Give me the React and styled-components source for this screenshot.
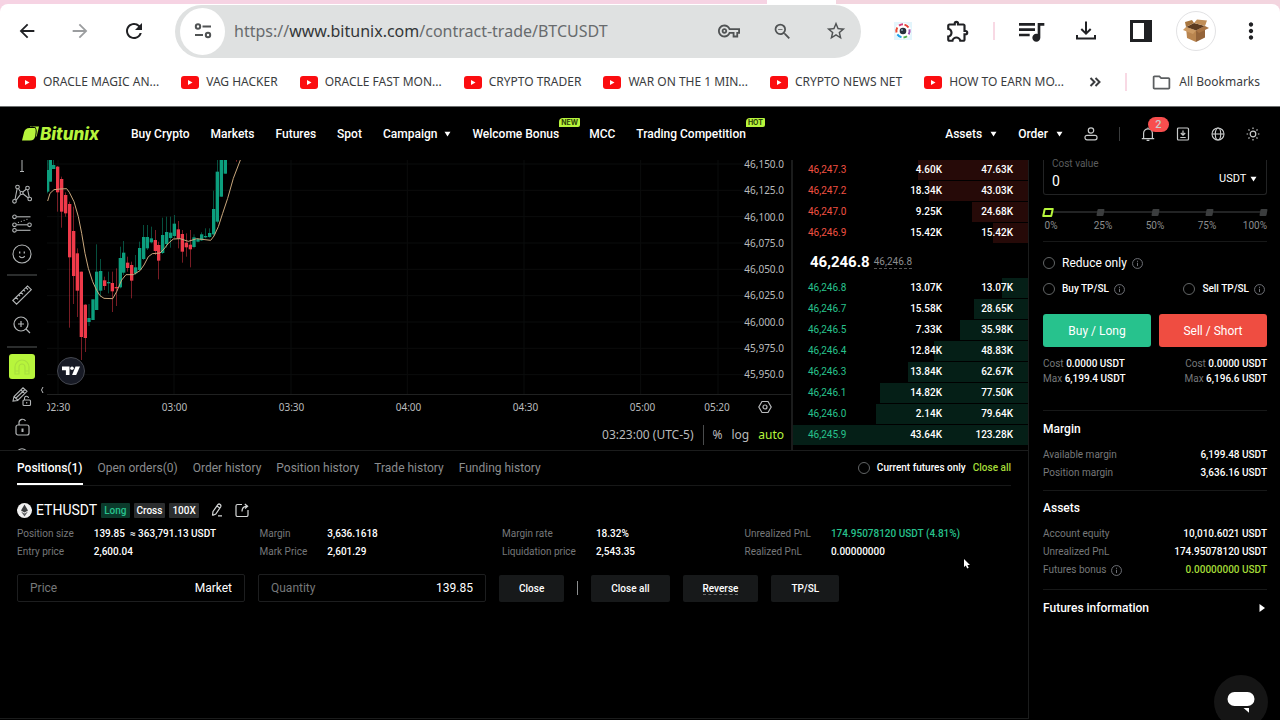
import React from 'react';
import styled, { createGlobalStyle, css } from 'styled-components';
import {
  MdArrowBack,
  MdArrowForward,
  MdRefresh,
  MdOutlineVpnKey,
  MdZoomOut,
  MdStarBorder,
  MdOutlineExtension,
  MdQueueMusic,
  MdMoreVert,
  MdOutlineFolder,
} from 'react-icons/md';

const GlobalStyle = createGlobalStyle`
  :root {
    --lime: #b7f53c;
    --green: #27c28d;
    --red: #ef4d41;
    --line: #1b1c1c;
    --muted: #76787a;
    --ui: Roboto, "Liberation Sans", sans-serif;
    --system: "Noto Sans", "Open Sans", sans-serif;
  }

  * {
    box-sizing: border-box;
  }

  body {
    margin: 0;
    background: #000;
    color: #fff;
    font: 400 10px/18px var(--ui);
  }

  button, input, select {
    font: inherit;
    color: inherit;
    margin: 0;
    padding: 0;
    border: 0;
    background: none;
  }

  a {
    color: inherit;
    text-decoration: none;
  }

  h2, dl, dd {
    margin: 0;
  }

  svg {
    display: block;
    flex: none;
  }
`;

const Page = styled.div`
  display: flex;
  flex-direction: column;
  min-height: 100vh;
`;

/* ---------- browser ---------- */

const Browser = styled.div`
  padding-top: 4px;
  background: linear-gradient(90deg, #f6d3e3 767px, #fff 767px, #fff 836px, #f3d5df 836px);
  border-bottom: 1px solid #6d7070;
  font-family: var(--system);
`;

const BrowserInner = styled.div`
  background: #fff;
  border-radius: 8px 8px 0 0;
  color: #202124;
`;

const NavBar = styled.div`
  display: flex;
  align-items: center;
  height: 54px;
  padding: 0 2px 0 16px;
`;

const NavButtons = styled.div`
  display: flex;
  gap: 31px;
  width: 159px;
`;

const IconButton = styled.button`
  display: flex;
  align-items: center;
  justify-content: center;
  color: ${({ $color }) => $color || 'inherit'};
`;

const Address = styled.div`
  display: flex;
  align-items: center;
  flex: 1;
  height: 53px;
  padding: 0 14px 0 5px;
  border-radius: 27px;
  background: #dfe1e1;
  color: #505354;
`;

const SiteChip = styled.button`
  display: flex;
  align-items: center;
  justify-content: center;
  width: 45px;
  height: 47px;
  border-radius: 50%;
  background: #fff;
`;

const UrlText = styled.span`
  flex: 1;
  margin-left: 9px;
  font-size: 16px;
  color: #686b6d;

  b {
    font-weight: 400;
    color: #333638;
  }
`;

const AddressActions = styled.div`
  display: flex;
  gap: 32px;
`;

const Extensions = styled.div`
  display: flex;
  align-items: center;
  margin-left: 14px;

  button {
    width: 55px;
  }

  i {
    margin: 0 8px;
  }
`;

const PinkLine = styled.i`
  width: 2px;
  height: 18px;
  background: #f8d9e4;
`;

const Avatar = styled.span`
  display: flex;
  align-items: center;
  justify-content: center;
  width: 40px;
  height: 40px;
  border: 1px solid #e2e2e4;
  border-radius: 50%;
`;

const Bookmarks = styled.div`
  display: flex;
  align-items: center;
  gap: 22px;
  height: 48px;
  padding: 0 20px 0 18px;
  font-size: 12px;
  color: #3a3c3e;

  a {
    display: flex;
    align-items: center;
    gap: 7px;
    white-space: nowrap;
  }
`;

const BookmarksEnd = styled.div`
  display: flex;
  align-items: center;
  gap: 24px;
  margin-left: auto;
`;

/* ---------- site header ---------- */

const Header = styled.header`
  display: flex;
  align-items: center;
  height: 53px;
  padding: 0 20px 0 22px;
  font-size: 12px;
  font-weight: 500;
`;

const Logo = styled.a`
  display: flex;
  align-items: center;
  gap: 1px;
  width: 109px;
  color: var(--lime);
  font: italic 800 17px/20px Inter, sans-serif;
`;

const Menu = styled.nav`
  display: flex;
  gap: 21px;
  flex: 1;

  a {
    position: relative;
    display: flex;
    align-items: center;
    gap: 7px;
    white-space: nowrap;
  }
`;

const Badged = styled.a`
  margin-right: 9px;
`;

const Tag = styled.span`
  position: absolute;
  left: 100%;
  top: -7px;
  padding: 0 2px;
  border-radius: 4px 1px 2px 0;
  background: var(--lime);
  color: #2c4206;
  font: 700 7px/9px Inter, sans-serif;
`;

const Tools = styled.div`
  display: flex;
  align-items: center;
  gap: 21px;
`;

const DropButton = styled.button`
  display: flex;
  align-items: center;
  gap: 8px;
`;

const Bell = styled(IconButton)`
  position: relative;

  span {
    position: absolute;
    left: 7px;
    top: -10px;
    width: 21px;
    border-radius: 8px;
    background: #f84e4e;
    font: 500 11px/15px var(--ui);
  }
`;

const IconSet = styled.div`
  display: flex;
  align-items: center;
  gap: 21px;
  color: #c9cbcb;
`;

const Divider = styled.i`
  width: 1px;
  height: ${({ $h }) => $h || 14}px;
  background: ${({ $tone }) => $tone || '#3a3c3d'};
`;

/* ---------- trading workspace ---------- */

const Workspace = styled.main`
  display: grid;
  grid-template-columns: minmax(0, 1fr) 251px;
  flex: 1;
`;

const Desk = styled.div`
  display: flex;
  flex-direction: column;
  border-bottom: 1px solid var(--line);
  margin-bottom: 1px;
`;

const TopRow = styled.div`
  display: grid;
  grid-template-columns: 47px minmax(0, 1fr) 236px;
  height: 291px;
  border-bottom: 1px solid var(--line);
  overflow: hidden;
`;

const DrawBar = styled.div`
  display: flex;
  flex-direction: column;
  align-items: center;
  width: 44px;
  color: #b2b5b6;

  hr {
    width: 30px;
    height: 2px;
    margin: 6px 0 4px;
    border: 0;
    background: #2b2d2d;
  }
`;

const DrawTool = styled.button`
  display: flex;
  flex: none;
  align-items: center;
  justify-content: center;
  width: 30px;
  height: ${({ $h }) => $h || 30}px;

  ${({ $active }) => $active && css`
    width: 26px;
    margin: 2px 0 3px;
    border-radius: 3px;
    background: var(--lime);
    color: #a8df3e;
  `}
`;

const Chart = styled.section`
  position: relative;
  display: flex;
  flex-direction: column;
  border-right: 2px solid var(--line);
  font-family: var(--system);
  color: #b9bbbd;
`;

const PlotRow = styled.div`
  display: flex;
  height: 235px;
  border-bottom: 1px solid #202121;
`;

const Plot = styled.svg`
  flex: 1;
  width: 0;
  height: 234px;
`;

const PriceAxis = styled.div`
  display: flex;
  flex-direction: column;
  justify-content: space-between;
  height: 218px;
  padding-right: 7px;
  line-height: 8px;
  text-align: right;
`;

const TimeAxis = styled.div`
  display: flex;
  align-items: center;
  overflow: hidden;
  height: 24px;

  span {
    flex: 0 0 117px;
    text-align: center;
  }

  span:first-child {
    margin-left: -48px;
  }

  span:nth-last-child(2) {
    flex-basis: 32px;
  }

  button {
    margin-left: auto;
    margin-right: 19px;
  }
`;

const ChartFoot = styled.div`
  display: flex;
  align-items: center;
  justify-content: flex-end;
  height: 31px;
  padding-right: 7px;
  gap: 9px;
  font-size: 12px;
`;

const ScaleButton = styled.button`
  color: ${({ $active }) => ($active ? 'var(--lime)' : 'inherit')};
`;

const TvMark = styled.a`
  position: absolute;
  left: 9px;
  top: 196px;
`;

const Collapse = styled.button`
  position: absolute;
  left: -8px;
  top: 226px;
`;

const Book = styled.section`
  overflow: hidden;
  margin-bottom: 3px;
  border-right: 1px solid var(--line);
`;

const BookTable = styled.table`
  width: 100%;
  table-layout: fixed;
  border-spacing: 0;
  font-weight: 500;

  td {
    height: 21px;
    padding: 0;
    border-bottom: 1px solid #000;
    text-align: right;
    line-height: 20px;
  }

  td:first-child {
    width: 64px;
    padding-left: 15px;
    text-align: left;
    font-weight: 400;
    color: ${({ $side }) => ($side === 'ask' ? '#f05142' : 'var(--green)')};
  }

  td:last-child {
    width: 86px;
    padding-right: 15px;
  }
`;

const DepthRow = styled.tr`
  background: linear-gradient(
    to left,
    ${({ $side }) => ($side === 'ask' ? '#260a08' : '#051f17')} ${({ $depth }) => $depth}%,
    transparent ${({ $depth }) => $depth}%
  );
`;

const LastPrice = styled.div`
  display: flex;
  align-items: center;
  gap: 4px;
  height: 34px;
  padding: 2px 0 0 17px;
  font-size: 15px;
  font-weight: 700;

  span {
    border-bottom: 1px dashed #555;
    color: #8b8d8e;
    font: 400 10px/12px var(--ui);
  }
`;

/* ---------- positions ---------- */

const Positions = styled.section`
  flex: 1;
  padding: 0 17px;
  border-right: 1px solid var(--line);
`;

const TabRow = styled.div`
  display: flex;
  align-items: center;
  gap: 15px;
  height: 35px;
  border-bottom: 1px solid #171818;
  font-size: 12px;
`;

const Tab = styled.button`
  height: 34px;
  padding-top: 2px;
  border-bottom: 2px solid ${({ $active }) => ($active ? '#fff' : 'transparent')};
  color: ${({ $active }) => ($active ? '#fff' : '#8b8d8f')};
  font-weight: ${({ $active }) => ($active ? 500 : 400)};
  white-space: nowrap;
`;

const Check = styled.label`
  display: flex;
  align-items: center;
  gap: 7px;
  font-size: ${({ $size }) => $size || 10}px;
  font-weight: ${({ $size }) => ($size ? 400 : 500)};

  input {
    appearance: none;
    width: 12px;
    height: 12px;
    border: 1px solid #626566;
    border-radius: 50%;
  }
`;

const CloseLink = styled.button`
  margin-left: -8px;
  color: #a5dc38;
  font-size: 10px;
  font-weight: 500;
`;

const Right = styled.div`
  margin-left: auto;
`;

const Symbol = styled.div`
  display: flex;
  align-items: center;
  gap: 4px;
  margin-top: 14px;
  height: 20px;
  font-size: 14px;
`;

const Pill = styled.span`
  padding: 0 3px;
  border-radius: 1px;
  background: ${({ $long }) => ($long ? '#0b3a2b' : '#2b2d2e')};
  color: ${({ $long }) => ($long ? 'var(--green)' : '#fff')};
  font: 500 10px/15px var(--ui);
`;

const SymbolIcon = styled(IconButton)`
  margin-left: 7px;
  color: #d5d7d7;
`;

const Facts = styled.div`
  display: grid;
  grid-template-columns: repeat(4, 1fr);
  margin: 5px 24px 0 0;
`;

const FactList = styled.dl`
  display: grid;
  grid-template-columns: auto 1fr;
  column-gap: 20px;
  white-space: nowrap;

  dt {
    color: var(--muted);
  }

  dd {
    font-weight: 500;
  }
`;

const Value = styled.dd`
  color: ${({ $color }) => $color || 'inherit'};
`;

const OrderForm = styled.div`
  display: flex;
  align-items: center;
  gap: 13px;
  margin-top: 13px;
`;

const Field = styled.label`
  display: flex;
  align-items: center;
  justify-content: space-between;
  width: 228px;
  height: 28px;
  padding: 0 12px;
  border: 1px solid #1d1e1f;
  border-radius: 2px;
  color: var(--muted);
  font-size: 12px;

  input {
    width: 80px;
    color: #fff;
    text-align: right;
  }
`;

const FormButton = styled.button`
  height: 27px;
  padding: 0 20px;
  border-radius: 2px;
  background: #17191a;
  font-weight: 500;
  line-height: 13px;

  span {
    border-bottom: ${({ $dashed }) => ($dashed ? '1px dashed #6a6c6d' : '0')};
  }
`;

/* ---------- order panel ---------- */

const Panel = styled.aside`
  padding: 0 13px 0 14px;
`;

const CostBox = styled.div`
  display: flex;
  align-items: flex-end;
  justify-content: space-between;
  height: 35px;
  padding: 0 9px 3px 8px;
  border: 1px solid #222324;
  border-top: 0;
  border-radius: 0 0 3px 3px;

  label {
    display: block;
    margin-top: -10px;
    color: #5b5d5e;
    line-height: 14px;
  }

  input {
    display: block;
    width: 90px;
    font-size: 14px;
    line-height: 20px;
  }
`;

const Currency = styled.span`
  display: flex;
  align-items: center;
  gap: 3px;
  padding-bottom: 3px;
  font-size: 11px;

  select {
    appearance: none;
  }
`;

const SliderBox = styled.div`
  position: relative;
  margin-top: 11px;

  input {
    appearance: none;
    position: absolute;
    left: 0;
    top: 0;
    width: 100%;
    height: 12px;
  }

  input::-webkit-slider-thumb {
    appearance: none;
    width: 10px;
    height: 9px;
    border: 2px solid var(--lime);
    border-radius: 1px;
    background: #000;
    transform: skewX(-12deg);
  }
`;

const Track = styled.div`
  display: flex;
  align-items: center;
  justify-content: space-between;
  height: 12px;
  background: linear-gradient(#222324, #222324) center / 100% 2px no-repeat;

  i {
    width: 7px;
    height: 7px;
    border-radius: 1px;
    background: #3b3d3e;
    transform: skewX(-10deg);
  }
`;

const Marks = styled.div`
  display: flex;
  justify-content: space-between;
  color: #8b8d8e;
  line-height: 16px;

  span {
    display: flex;
    justify-content: center;
    width: 16px;
  }

  span:last-child {
    justify-content: flex-end;
  }
`;

const Line = styled.hr`
  height: 1px;
  margin: ${({ $m }) => $m};
  border: 0;
  background: #171818;
`;

const Split = styled.div`
  display: flex;
  align-items: center;
  justify-content: space-between;
  padding-right: ${({ $pad }) => $pad || 0}px;
`;

const CheckGroup = styled.div`
  display: flex;
  align-items: center;
  gap: 5px;
  height: 26px;
`;

const SideButtons = styled.div`
  display: grid;
  grid-template-columns: 1fr 1fr;
  gap: 8px;
  margin-top: 12px;
`;

const SideButton = styled.button`
  height: 33px;
  border-radius: 3px;
  background: ${({ $side }) => ($side === 'sell' ? 'var(--red)' : 'var(--green)')};
  font-size: 12px;
`;

const Limits = styled(Split)`
  margin-top: 9px;
  line-height: 15px;
  color: var(--muted);

  b {
    font-weight: 500;
    color: #fff;
  }

  div:last-child {
    text-align: right;
  }
`;

const Title = styled.h2`
  font: 500 12px/18px var(--ui);
`;

const Balance = styled.dl`
  margin-top: 8px;

  div {
    display: flex;
    justify-content: space-between;
  }

  dt {
    display: flex;
    align-items: center;
    gap: 5px;
    color: var(--muted);
  }

  dd {
    font-weight: 500;
  }
`;

const InfoRow = styled.button`
  display: flex;
  align-items: center;
  justify-content: space-between;
  width: 100%;
  padding-right: 2px;
  font-size: 12px;
  font-weight: 500;
`;

const Chat = styled.button`
  position: fixed;
  right: 12px;
  bottom: -9px;
  display: flex;
  align-items: center;
  justify-content: center;
  width: 54px;
  height: 54px;
  border-radius: 50%;
  background: #151515;
`;

const Pointer = styled.svg`
  position: fixed;
  left: 964px;
  top: 559px;
`;

/* ---------- data ---------- */

const bookmarks = [
  'ORACLE MAGIC AN...', 'VAG HACKER', 'ORACLE FAST MON...', 'CRYPTO TRADER',
  'WAR ON THE 1 MIN...', 'CRYPTO NEWS NET', 'HOW TO EARN MO...',
];

const prices = ['46,150.0', '46,125.0', '46,100.0', '46,075.0', '46,050.0', '46,025.0', '46,000.0', '45,975.0', '45,950.0'];
const times = ['02:30', '03:00', '03:30', '04:00', '04:30', '05:00', '05:20'];

const asks = [
  ['46,247.3', '4.60K', '47.63K', 47],
  ['46,247.2', '18.34K', '43.03K', 42],
  ['46,247.0', '9.25K', '24.68K', 24],
  ['46,246.9', '15.42K', '15.42K', 15],
];

const bids = [
  ['46,246.8', '13.07K', '13.07K', 11],
  ['46,246.7', '15.58K', '28.65K', 23],
  ['46,246.5', '7.33K', '35.98K', 29],
  ['46,246.4', '12.84K', '48.83K', 40],
  ['46,246.3', '13.84K', '62.67K', 51],
  ['46,246.1', '14.82K', '77.50K', 63],
  ['46,246.0', '2.14K', '79.64K', 64.5],
  ['46,245.9', '43.64K', '123.28K', 100],
];

// x, wick top, wick bottom, body top, body bottom, up
const candles = [
  [143, 165, 265, 195, 260, 1], [151, 165, 230, 165, 230, 1], [161, 165, 192, 180, 192, 1],
  [173, 183, 320, 185, 262, 0], [185, 215, 368, 222, 320, 0], [197, 262, 335, 270, 325, 0],
  [209, 290, 668, 297, 457, 0], [221, 305, 597, 378, 513, 0], [232, 430, 636, 445, 557, 0],
  [244, 500, 765, 500, 696, 0], [256, 598, 741, 599, 699, 0], [267, 597, 663, 639, 651, 1],
  [279, 583, 645, 583, 645, 1], [290, 418, 615, 500, 615, 1], [302, 462, 575, 498, 557, 1],
  [314, 515, 555, 526, 543, 0], [326, 500, 565, 531, 535, 1], [337, 500, 621, 534, 559, 0],
  [349, 490, 603, 546, 550, 0], [361, 425, 550, 459, 547, 1], [371, 408, 510, 443, 503, 1],
  [383, 455, 500, 473, 489, 0], [395, 470, 580, 480, 527, 0], [407, 450, 510, 487, 505, 1],
  [419, 410, 497, 429, 495, 1], [431, 360, 465, 396, 462, 1], [442, 360, 435, 396, 430, 1],
  [454, 365, 415, 400, 412, 1], [466, 375, 450, 405, 438, 0], [476, 410, 523, 420, 467, 0],
  [488, 338, 447, 390, 444, 1], [500, 335, 428, 381, 417, 1], [512, 335, 428, 383, 399, 1],
  [523, 330, 400, 356, 393, 1], [535, 348, 430, 373, 401, 0], [547, 375, 473, 387, 440, 0],
  [559, 385, 455, 413, 427, 0], [571, 375, 487, 419, 433, 0], [582, 388, 430, 397, 426, 1],
  [594, 400, 412, 402, 410, 1], [605, 382, 408, 388, 406, 1], [617, 370, 400, 393, 397, 1],
  [629, 370, 398, 384, 396, 1], [641, 257, 392, 312, 388, 1], [652, 165, 355, 200, 350, 1],
  [664, 150, 275, 150, 275, 1], [676, 150, 206, 150, 206, 1], [710, 150, 170, 150, 158, 0],
];

const average = '143,288 150,265 162,254 180,252 200,251 208,262 222,290 235,335 245,385 255,445 265,490 278,530 290,556 300,572 312,580 338,581 350,560 365,525 378,509 400,509 420,497 432,480 445,455 457,446 480,444 492,432 505,415 520,402 540,401 565,409 590,401 632,406 642,393 655,365 668,325 683,280 700,220 721,165';

const facts = [
  [['Position size', <>139.85 &nbsp;≈ 363,791.13 USDT</>], ['Entry price', '2,600.04']],
  [['Margin', '3,636.1618'], ['Mark Price', '2,601.29']],
  [['Margin rate', '18.32%'], ['Liquidation price', '2,543.35']],
  [['Unrealized PnL', '174.95078120 USDT (4.81%)', 'var(--green)'], ['Realized PnL', '0.00000000']],
];

/* ---------- icons ---------- */

const Stroke = ({ size = 20, w = 1, children, box = 20 }) => (
  <svg width={size} height={size} viewBox={`0 0 ${box} ${box}`} fill="none" stroke="currentColor" strokeWidth={w} aria-hidden="true">
    {children}
  </svg>
);

const Caret = ({ size = 7 }) => (
  <svg width={size} height={size - 1} viewBox="0 0 8 7" fill="#fff" aria-hidden="true"><path d="M.5.8h7L4 6.4z" /></svg>
);

const InfoIcon = () => (
  <svg width="11" height="11" viewBox="0 0 12 12" fill="none" stroke="#777a80" aria-hidden="true">
    <circle cx="6" cy="6" r="5.4" /><path d="M6 5.2v3.6M6 3v1.2" />
  </svg>
);

const YouTube = () => (
  <svg width="18" height="13" viewBox="0 0 18 13" aria-hidden="true">
    <rect width="18" height="13" rx="3" fill="#fb0d10" /><path d="M7 4v5l4.500-2.500z" fill="#fff" />
  </svg>
);

const TuneIcon = () => (
  <Stroke w={2}>
    <circle cx="5" cy="5.500" r="2.200" /><path d="M9.500 5.500H18M2 14H10" /><circle cx="15" cy="14" r="2.200" />
  </Stroke>
);

const LensIcon = () => (
  <svg width="18" height="18" viewBox="0 0 18 18" aria-hidden="true">
    <path d="M0 0h18v18H0z" fill="#e3f5fc" />
    <circle cx="9" cy="9" r="8.200" fill="#fff" />
    <g fill="none" strokeWidth="2">
      <path d="M5 3.600A6.600 6.600 0 0 1 9 2.300" stroke="#d43c78" />
      <path d="M10.500 2.600A6.600 6.600 0 0 1 14.500 5.600" stroke="#e64137" />
      <path d="M15.500 7.400A6.600 6.600 0 0 1 14.600 12.400" stroke="#9a4fb5" />
      <path d="M13 14.200A6.600 6.600 0 0 1 9.500 15.500" stroke="#4caf50" />
      <path d="M7.500 15.300A6.600 6.600 0 0 1 3.300 12.400" stroke="#20a4e8" />
      <path d="M2.500 10.500A6.600 6.600 0 0 1 3.300 5.600" stroke="#e94b35" />
    </g>
    <circle cx="9" cy="9" r="3.300" fill="#26303c" /><circle cx="8" cy="8" r="1" fill="#8fa4b8" />
  </svg>
);

const BoxIcon = () => (
  <svg width="28" height="24" viewBox="0 0 28 24" aria-hidden="true">
    <path d="M4 8l10 3.500V23L5 19z" fill="#b9854f" />
    <path d="M14 11.500L23 7v11.500L14 23z" fill="#94643a" />
    <path d="M4 8l8-4 11 3-9 4.500z" fill="#5c3b20" />
    <path d="M4 8L1 11l10 4 3-3.500z" fill="#cc9a63" />
    <path d="M4 8L3 3l7-2 2 3z" fill="#a8763f" />
    <path d="M12 4l3-3.500 10 1L23 7z" fill="#c08e58" />
    <path d="M23 7l4 2-10 5-3-2.500z" fill="#a97444" />
  </svg>
);

const DownloadIcon = () => (
  <Stroke size={22} box={22} w={2}><path d="M11 1.500v12M6.300 9l4.700 4.700L15.700 9M2 15v3.500h18V15" /></Stroke>
);

const SidePanelIcon = () => (
  <svg width="22" height="22" viewBox="0 0 22 22" aria-hidden="true">
    <path d="M0 0h22v22H0zM3 3v16h11V3z" fill="#1f2023" fillRule="evenodd" />
  </svg>
);

const LogoMark = () => (
  <svg width="17" height="15" viewBox="0 0 17 15" fill="#b7f53c" aria-hidden="true">
    <path d="M2 6.500Q3 2 7.500 2h5.500q1 1 .7 4l-.5 4Q12.600 14.500 8 14.500H0z" />
    <path d="M8 .5h9l-2 8.500q-.3 1.500-1.300 2.300Q15.800 4 13.500 1.300q-2-.8-5.500-.3z" />
  </svg>
);

/* ---------- sections ---------- */

const BrowserChrome = () => (
  <Browser>
    <BrowserInner>
      <NavBar>
        <NavButtons>
          <IconButton aria-label="Back"><MdArrowBack size={22} /></IconButton>
          <IconButton aria-label="Forward" $color="#9b9d9f"><MdArrowForward size={22} /></IconButton>
          <IconButton aria-label="Reload"><MdRefresh size={24} /></IconButton>
        </NavButtons>
        <Address>
          <SiteChip aria-label="Site information"><TuneIcon /></SiteChip>
          <UrlText>https://<b>www.bitunix.com</b>/contract-trade/BTCUSDT</UrlText>
          <AddressActions>
            <IconButton aria-label="Passwords"><MdOutlineVpnKey size={22} /></IconButton>
            <IconButton aria-label="Zoom"><MdZoomOut size={21} /></IconButton>
            <IconButton aria-label="Bookmark"><MdStarBorder size={22} /></IconButton>
          </AddressActions>
        </Address>
        <Extensions>
          <IconButton aria-label="Lens extension"><LensIcon /></IconButton>
          <IconButton aria-label="Extensions"><MdOutlineExtension size={26} /></IconButton>
          <PinkLine />
          <IconButton aria-label="Media"><MdQueueMusic size={32} /></IconButton>
          <IconButton aria-label="Downloads"><DownloadIcon /></IconButton>
          <IconButton aria-label="Side panel"><SidePanelIcon /></IconButton>
          <IconButton aria-label="Profile"><Avatar><BoxIcon /></Avatar></IconButton>
          <IconButton aria-label="More"><MdMoreVert size={26} /></IconButton>
        </Extensions>
      </NavBar>
      <Bookmarks>
        {bookmarks.map((name) => <a href="#" key={name}><YouTube />{name}</a>)}
        <BookmarksEnd>
          <IconButton aria-label="More bookmarks">
            <Stroke size={12} box={12} w={2}><path d="M1.500 2l4 4-4 4M6.500 2l4 4-4 4" /></Stroke>
          </IconButton>
          <PinkLine />
          <a href="#"><MdOutlineFolder size={21} color="#5b5e60" />All Bookmarks</a>
        </BookmarksEnd>
      </Bookmarks>
    </BrowserInner>
  </Browser>
);

const SiteHeader = () => (
  <Header>
    <Logo href="#"><LogoMark />Bitunix</Logo>
    <Menu>
      <a href="#">Buy Crypto</a>
      <a href="#">Markets</a>
      <a href="#">Futures</a>
      <a href="#">Spot</a>
      <a href="#">Campaign <Caret /></a>
      <Badged href="#">Welcome Bonus<Tag>NEW</Tag></Badged>
      <a href="#">MCC</a>
      <a href="#">Trading Competition<Tag>HOT</Tag></a>
    </Menu>
    <Tools>
      <DropButton>Assets <Caret /></DropButton>
      <DropButton>Order <Caret /></DropButton>
      <IconSet>
        <IconButton aria-label="Account">
          <Stroke size={14} box={14} w={1.2}><circle cx="7" cy="3.500" r="2.700" /><rect x="1" y="8.300" width="12" height="4.500" rx="2" /></Stroke>
        </IconButton>
        <Divider />
        <Bell aria-label="Notifications">
          <Stroke size={14} box={14} w={1.2}><path d="M.8 11.600h12.400M2.600 11.500V6.200a4.400 4.400 0 0 1 8.800 0v5.300M5.600 13.300h2.800M7 .5v1.300" /></Stroke>
          <span>2</span>
        </Bell>
        <IconButton aria-label="Deposit">
          <Stroke size={14} box={14} w={1.2}><rect x="1.500" y="1" width="11" height="12" rx="1" /><path d="M7 3.500v4.500M4.800 6L7 8.200 9.200 6M4.300 10.500h5.400" /></Stroke>
        </IconButton>
        <IconButton aria-label="Language">
          <Stroke size={14} box={14} w={1.1}><circle cx="7" cy="7" r="6" /><ellipse cx="7" cy="7" rx="2.700" ry="6" /><path d="M1 7h12" /></Stroke>
        </IconButton>
        <IconButton aria-label="Theme">
          <Stroke size={14} box={14} w={1.2}><circle cx="7" cy="7" r="2.800" /><path d="M7 .6v1.500M7 11.900v1.500M.6 7h1.500M11.900 7h1.500M2.500 2.500l1 1M10.500 10.500l1 1M11.500 2.500l-1 1M3.500 10.500l-1 1" /></Stroke>
        </IconButton>
      </IconSet>
    </Tools>
  </Header>
);

const DrawTools = () => (
  <DrawBar>
    <DrawTool $h={19} aria-label="Text">
      <Stroke><path d="M10 0v11.500M8 11.500h4" /></Stroke>
    </DrawTool>
    <DrawTool aria-label="Patterns">
      <Stroke w={1.1}>
        <path d="M3 15.500L5.100 4.800M6.500 4.800l2 3M4 16.300l4.600-6M10.700 8l3.600-2.800M15.700 6l1.500 7.200M10.900 9.800l5.400 4.200" />
        <circle cx="5.500" cy="3" r="1.800" /><circle cx="15.500" cy="4" r="1.800" /><circle cx="2.500" cy="17.300" r="1.800" /><circle cx="17.700" cy="15" r="1.800" /><circle cx="9.600" cy="9" r="1.500" />
      </Stroke>
    </DrawTool>
    <DrawTool aria-label="Levels">
      <Stroke w={1.1}>
        <circle cx="2.500" cy="2.800" r="1.800" /><path d="M4.500 2.800H18.500" /><circle cx="2.500" cy="10.800" r="1.800" /><path d="M4.500 10.800H15.500" />
        <circle cx="17.500" cy="10.800" r="1.800" /><circle cx="2.500" cy="16.300" r="1.800" /><path d="M4.500 16.300H18.500" /><path d="M6 8.500L16 5" strokeDasharray="1 2" />
      </Stroke>
    </DrawTool>
    <DrawTool $h={29} aria-label="Icons">
      <Stroke w={1.1}>
        <circle cx="10" cy="10" r="9" /><path d="M7.300 12q.7 1.800 2.700 1.800t2.700-1.800" /><path d="M7.700 7.500v2M12.300 7.500v2" strokeWidth="1.300" />
      </Stroke>
    </DrawTool>
    <hr />
    <DrawTool aria-label="Measure">
      <Stroke w={1.1}><path d="M.8 15.500L15.500.9l3.800 3.700L4.600 19.200zM4 12.300l2 2M6.600 9.700l1.500 1.500M9 7.300l2 2M11.600 4.800l1.500 1.500M14 2.500l2 2" /></Stroke>
    </DrawTool>
    <DrawTool aria-label="Zoom in">
      <Stroke w={1.2}><circle cx="9" cy="9" r="7" /><path d="M14 14l4 4M9 6v6M6 9h6" /></Stroke>
    </DrawTool>
    <hr />
    <DrawTool $active $h={25} aria-label="Magnet">
      <Stroke w={1.2}><path d="M3 17v-7a7 7 0 0 1 14 0v7h-4v-7a3 3 0 0 0-6 0v7zM3 14h4M13 14h4" /></Stroke>
    </DrawTool>
    <DrawTool aria-label="Stay in drawing mode">
      <Stroke w={1.1}>
        <path d="M1 14l1-4.500L11 .8l4 3.500-9.300 9.200zM9 3l3.800 3.600M2 9.500L5.700 13M4 11L13 2.500" />
        <rect x="11" y="13" width="7.500" height="5.500" rx="1" /><path d="M12.500 13v-1.500a2 2 0 0 1 4-.5M14.700 15v1.500" />
      </Stroke>
    </DrawTool>
    <DrawTool aria-label="Lock drawings">
      <Stroke w={1.2}><rect x="4" y="8" width="13" height="10" rx="2" /><path d="M7 8V5.500a3.500 3.500 0 0 1 6.500-1.500" /><path d="M10.500 11.500v3.500" strokeWidth="2" /></Stroke>
    </DrawTool>
    <DrawTool aria-label="Hide drawings">
      <Stroke w={1.2}><path d="M4.500 5Q10-1.500 15.500 5" /></Stroke>
    </DrawTool>
  </DrawBar>
);

const PriceChart = () => (
  <Chart>
    <PlotRow>
      <Plot viewBox="141 165 2400 702" preserveAspectRatio="xMinYMin slice" aria-label="BTCUSDT price">
        <g stroke="#0b0c0c" strokeWidth="3">
          {prices.map((p, i) => <path key={p} d={`M141 ${177 + i * 79}H2541`} />)}
          {[174, 522, 873, 1222, 1572, 1922, 2154].map((x) => <path key={x} d={`M${x} 165V870`} />)}
        </g>
        {candles.map(([x, top, bottom, open, close, up]) => (
          <g key={x} fill={up ? '#0c9f7e' : '#f03a4a'}>
            <rect x={x - 1} y={top} width="2" height={bottom - top} opacity="0.75" />
            <rect x={x - 5} y={open} width="10" height={close - open} />
          </g>
        ))}
        <polyline points={average} fill="none" stroke="#c9a77c" strokeWidth="3" strokeLinejoin="round" />
      </Plot>
      <PriceAxis>{prices.map((p) => <span key={p}>{p}</span>)}</PriceAxis>
    </PlotRow>
    <TimeAxis>
      {times.map((t) => <span key={t}>{t}</span>)}
      <button aria-label="Chart settings">
        <Stroke size={14} box={14} w={1.2}><path d="M4 1.500h6L13.200 7 10 12.500H4L.8 7z" /><circle cx="7" cy="7" r="2" /></Stroke>
      </button>
    </TimeAxis>
    <ChartFoot>
      <span>03:23:00 (UTC-5)</span>
      <Divider $h={20} $tone="#4a4c4d" />
      <ScaleButton>%</ScaleButton>
      <ScaleButton>log</ScaleButton>
      <ScaleButton $active>auto</ScaleButton>
    </ChartFoot>
    <TvMark href="#" aria-label="TradingView">
      <svg width="30" height="30" viewBox="0 0 30 30">
        <circle cx="15" cy="15" r="13.500" fill="#171a25" stroke="#44474f" />
        <g fill="#fff"><path d="M6 10.500h7.500V19h-3.600v-4.700H6z" /><circle cx="16" cy="12.200" r="1.800" /><path d="M19.500 10.500H24L20.200 19h-4.100z" /></g>
      </svg>
    </TvMark>
    <Collapse aria-label="Collapse toolbar">
      <Stroke size={8} box={8}><path d="M4 1L2.500 4 4 7" /></Stroke>
    </Collapse>
  </Chart>
);

const BookSide = ({ side, rows }) => (
  <BookTable $side={side}>
    <tbody>
      {rows.map(([price, amount, total, depth]) => (
        <DepthRow key={price} $side={side} $depth={depth}>
          <td>{price}</td>
          <td>{amount}</td>
          <td>{total}</td>
        </DepthRow>
      ))}
    </tbody>
  </BookTable>
);

const OrderBook = () => (
  <Book>
    <BookSide side="ask" rows={asks} />
    <LastPrice>46,246.8<span>46,246.8</span></LastPrice>
    <BookSide side="bid" rows={bids} />
  </Book>
);

const PositionsPanel = () => (
  <Positions>
    <TabRow>
      <Tab $active>Positions(1)</Tab>
      <Tab>Open orders(0)</Tab>
      <Tab>Order history</Tab>
      <Tab>Position history</Tab>
      <Tab>Trade history</Tab>
      <Tab>Funding history</Tab>
      <Right><Check><input type="checkbox" />Current futures only</Check></Right>
      <CloseLink>Close all</CloseLink>
    </TabRow>
    <Symbol>
      <svg width="15" height="15" viewBox="0 0 15 15" aria-hidden="true">
        <circle cx="7.500" cy="7.500" r="7.500" fill="#f0f0f0" />
        <path d="M7.500 1.500L4 7.500l3.500 2 3.500-2z" fill="#3a3c3e" /><path d="M4 8.500l3.500 5 3.500-5-3.500 2z" fill="#626466" />
      </svg>
      ETHUSDT
      <Pill $long>Long</Pill>
      <Pill>Cross</Pill>
      <Pill>100X</Pill>
      <SymbolIcon aria-label="Adjust leverage">
        <Stroke size={14} box={14} w={1.2}><path d="M2.500 12.500l.5-4L8 1.500q1-1 2.200 0t.4 2.500L5.800 11l-3.300 1.500M7 3l2.800 2M8 12.800h4" /></Stroke>
      </SymbolIcon>
      <SymbolIcon aria-label="Share">
        <Stroke size={14} box={14} w={1.2}><path d="M7 1.500H2.500q-1.500 0-1.500 1.500v9q0 1.500 1.500 1.500h9q1.500 0 1.500-1.500V7M7 8.500q0-5 5-5.300M9.800 1l2.800 2.200L10 5.500" /></Stroke>
      </SymbolIcon>
    </Symbol>
    <Facts>
      {facts.map((group) => (
        <FactList key={group[0][0]}>
          {group.map(([name, value, color]) => (
            <React.Fragment key={name}>
              <dt>{name}</dt>
              <Value $color={color}>{value}</Value>
            </React.Fragment>
          ))}
        </FactList>
      ))}
    </Facts>
    <OrderForm>
      <Field>Price<input defaultValue="Market" /></Field>
      <Field>Quantity<input defaultValue="139.85" /></Field>
      <FormButton>Close</FormButton>
      <Divider $tone="#8b8d8e" />
      <FormButton>Close all</FormButton>
      <FormButton $dashed><span>Reverse</span></FormButton>
      <FormButton>TP/SL</FormButton>
    </OrderForm>
  </Positions>
);

const OrderPanel = () => (
  <Panel>
    <CostBox>
      <div>
        <label htmlFor="cost">Cost value</label>
        <input id="cost" defaultValue="0" />
      </div>
      <Currency>
        <select aria-label="Currency"><option>USDT</option></select>
        <Caret />
      </Currency>
    </CostBox>
    <SliderBox>
      <Track><i /><i /><i /><i /><i /></Track>
      <input type="range" defaultValue="0" aria-label="Amount" />
      <Marks><span>0%</span><span>25%</span><span>50%</span><span>75%</span><span>100%</span></Marks>
    </SliderBox>
    <Line $m="7px 0 8px" />
    <CheckGroup><Check $size={12}><input type="checkbox" />Reduce only</Check><InfoIcon /></CheckGroup>
    <Split $pad={2}>
      <CheckGroup><Check><input type="checkbox" />Buy TP/SL</Check><InfoIcon /></CheckGroup>
      <CheckGroup><Check><input type="checkbox" />Sell TP/SL</Check><InfoIcon /></CheckGroup>
    </Split>
    <SideButtons>
      <SideButton $side="buy">Buy / Long</SideButton>
      <SideButton $side="sell">Sell / Short</SideButton>
    </SideButtons>
    <Limits>
      <div>Cost <b>0.0000 USDT</b><br />Max <b>6,199.4 USDT</b></div>
      <div>Cost <b>0.0000 USDT</b><br />Max <b>6,196.6 USDT</b></div>
    </Limits>
    <Line $m="24px 0 9px" />
    <Title>Margin</Title>
    <Balance>
      <div><dt>Available margin</dt><dd>6,199.48 USDT</dd></div>
      <div><dt>Position margin</dt><dd>3,636.16 USDT</dd></div>
    </Balance>
    <Line $m="8px 0" />
    <Title>Assets</Title>
    <Balance>
      <div><dt>Account equity</dt><dd>10,010.6021 USDT</dd></div>
      <div><dt>Unrealized PnL</dt><dd>174.95078120 USDT</dd></div>
      <div><dt>Futures bonus <InfoIcon /></dt><Value $color="#a5dc38">0.00000000 USDT</Value></div>
    </Balance>
    <Line $m="10px 0 9px" />
    <InfoRow>
      Futures information
      <svg width="6" height="8" viewBox="0 0 6 8" fill="#fff" aria-hidden="true"><path d="M.5 0L6 4 .5 8z" /></svg>
    </InfoRow>
  </Panel>
);

const App = () => (
  <>
    <GlobalStyle />
    <Page>
      <BrowserChrome />
      <SiteHeader />
      <Workspace>
        <Desk>
          <TopRow>
            <DrawTools />
            <PriceChart />
            <OrderBook />
          </TopRow>
          <PositionsPanel />
        </Desk>
        <OrderPanel />
      </Workspace>
      <Chat aria-label="Chat">
        <svg width="28" height="22" viewBox="0 0 28 22" fill="#fff"><rect x=".5" y="1" width="27" height="14" rx="7" /><path d="M16.500 17h5.500v4.800z" /></svg>
      </Chat>
      <Pointer width="6" height="10" viewBox="0 0 6 10" aria-hidden="true"><path d="M0 0v8l1.800-1.500L3.200 9.500l1.500-.8-1.300-2.700H6z" fill="#fff" /></Pointer>
    </Page>
  </>
);

export default App;
